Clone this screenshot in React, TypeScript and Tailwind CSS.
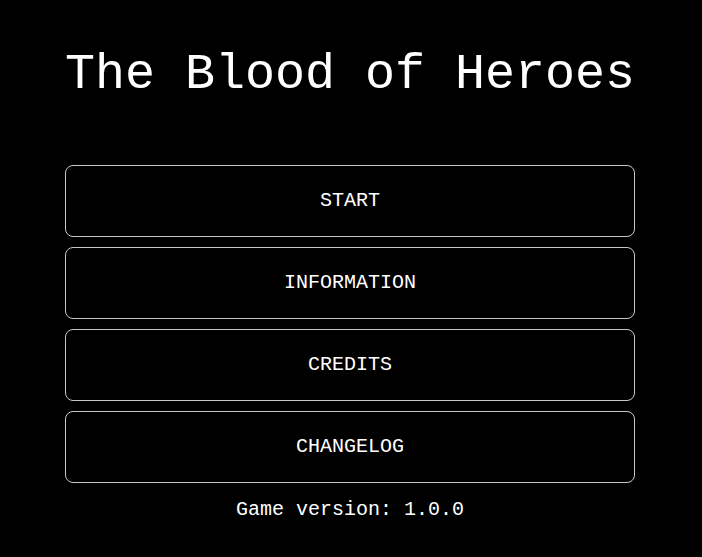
import React from 'react';

const items = ['START', 'INFORMATION', 'CREDITS', 'CHANGELOG'];

const App: React.FC = () => {
  return (
    <div className="min-h-[557px] w-full bg-black text-white font-['Liberation_Mono','Courier_New',monospace]">
      <div className="ml-[65px] w-[570px] pt-[50px] flex flex-col items-center">
        <h1 className="text-[50px] leading-[50px] text-white whitespace-nowrap">The Blood of Heroes</h1>
        <div className="mt-[65px] w-full flex flex-col gap-[10px]">
          {items.map((label) => (
            <button
              key={label}
              className="h-[72px] w-full rounded-[8px] border border-[#c8c8c8] bg-black text-[20px] text-white"
            >
              {label}
            </button>
          ))}
        </div>
        <p className="mt-[12px] text-[20px] text-white">Game version: 1.0.0</p>
      </div>
    </div>
  );
};

export default App;
